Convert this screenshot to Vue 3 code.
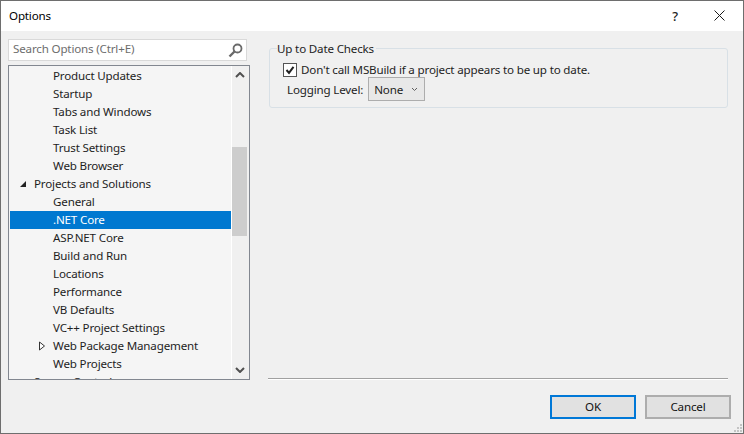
<script setup>
const rows = [
  { label: 'Product Updates', indent: 'child' },
  { label: 'Startup', indent: 'child' },
  { label: 'Tabs and Windows', indent: 'child' },
  { label: 'Task List', indent: 'child' },
  { label: 'Trust Settings', indent: 'child' },
  { label: 'Web Browser', indent: 'child' },
  { label: 'Projects and Solutions', indent: 'parent', arrow: 'open' },
  { label: 'General', indent: 'child' },
  { label: '.NET Core', indent: 'child', selected: true },
  { label: 'ASP.NET Core', indent: 'child' },
  { label: 'Build and Run', indent: 'child' },
  { label: 'Locations', indent: 'child' },
  { label: 'Performance', indent: 'child' },
  { label: 'VB Defaults', indent: 'child' },
  { label: 'VC++ Project Settings', indent: 'child' },
  { label: 'Web Package Management', indent: 'child', arrow: 'closed' },
  { label: 'Web Projects', indent: 'child' },
  { label: 'Source Control', indent: 'parent' },
]
</script>

<template>
  <div class="window">
    <header class="titlebar">
      <span class="title">Options</span>
      <span class="help">?</span>
      <svg class="close" width="11" height="11" viewBox="0 0 11 11"><path d="M.5.5l10 10M10.5.5l-10 10" stroke="#1a1a1a" fill="none"/></svg>
    </header>
    <div class="content">
      <div class="main">
        <aside class="left">
          <div class="search">
            <span class="placeholder">Search Options (Ctrl+E)</span>
            <svg width="15" height="15" viewBox="0 0 15 15"><circle cx="9.5" cy="5.5" r="4" fill="none" stroke="#6a6a6a" stroke-width="1.8"/><path d="M6.5 8.5L1.5 13.5" stroke="#6a6a6a" stroke-width="2.4"/></svg>
          </div>
          <div class="tree">
            <div class="tree-list">
              <div v-for="r in rows" :key="r.label" class="row" :class="[r.indent, { selected: r.selected }]">
                <svg v-if="r.arrow === 'open'" class="arrow" width="8" height="8" viewBox="0 0 8 8"><path d="M7 1v6H1z" fill="#222"/></svg>
                <svg v-if="r.arrow === 'closed'" class="arrow" width="8" height="10" viewBox="0 0 8 10"><path d="M1.5 1l5 4-5 4z" fill="#fff" stroke="#333"/></svg>
                <span>{{ r.label }}</span>
              </div>
            </div>
            <div class="scrollbar">
              <div class="sb-btn"><svg width="10" height="6" viewBox="0 0 10 6"><path d="M1 5l4-4 4 4" fill="none" stroke="#505050" stroke-width="2"/></svg></div>
              <div class="sb-track"><div class="sb-thumb"></div></div>
              <div class="sb-btn"><svg width="10" height="6" viewBox="0 0 10 6"><path d="M1 1l4 4 4-4" fill="none" stroke="#505050" stroke-width="2"/></svg></div>
            </div>
          </div>
        </aside>
        <section class="right">
          <fieldset class="group">
            <legend>Up to Date Checks</legend>
            <label class="check-row">
              <span class="check"><svg width="12" height="12" viewBox="0 0 12 12"><path d="M2.5 6l2.5 2.8 4.5-6" fill="none" stroke="#222" stroke-width="2"/></svg></span>
              <span>Don't call MSBuild if a project appears to be up to date.</span>
            </label>
            <div class="log-row">
              <span>Logging Level:</span>
              <div class="select">
                <span>None</span>
                <svg width="7" height="5" viewBox="0 0 7 5"><path d="M1 1l2.5 2.5L6 1" fill="none" stroke="#606060"/></svg>
              </div>
            </div>
          </fieldset>
          <div class="divider"></div>
        </section>
      </div>
      <footer class="footer">
        <button class="btn primary">OK</button>
        <button class="btn">Cancel</button>
      </footer>
      <svg class="grip" width="10" height="10" viewBox="0 0 10 10"><path d="M7 1h2v2H7zM4 4h2v2H4zM7 4h2v2H7zM1 7h2v2H1zM4 7h2v2H4zM7 7h2v2H7z" fill="#c4c4c4"/></svg>
    </div>
  </div>
</template>

<style>
html, body { margin: 0; background: #f0f0f0; }
</style>

<style scoped>
.window {
  width: 744px;
  height: 434px;
  box-sizing: border-box;
  border: 1px solid #6e6e6e;
  font-family: "Noto Sans", "Open Sans", sans-serif;
  font-size: 11.6px;
  letter-spacing: -0.17px;
  color: #1e1e1e;
  display: flex;
  flex-direction: column;
  overflow: hidden;
  background: #f0f0f0;
}
.titlebar {
  height: 30px;
  box-sizing: border-box;
  flex: none;
  background: #fff;
  display: flex;
  align-items: center;
  padding: 0 18px 1px 8px;
}
.title { flex: 1; color: #000; line-height: 16px; padding-top: 1px; }
.help { margin-right: 36px; font-size: 13px; color: #222; font-weight: 500; }
.close { display: block; }
.content { flex: 1; display: flex; flex-direction: column; position: relative; min-height: 0; }
.main { display: flex; height: 349px; padding: 8px 0 0 7px; box-sizing: border-box; }
.left { width: 242px; flex: none; display: flex; flex-direction: column; gap: 4px; }
.search {
  width: 239px;
  height: 22px;
  box-sizing: border-box;
  border: 1px solid #d9d9d9;
  background: #fff;
  display: flex;
  align-items: center;
  justify-content: space-between;
  padding: 0 3px 0 4px;
}
.placeholder { color: #6d6d6d; line-height: 16px; padding-bottom: 2px; }
.tree {
  width: 242px;
  height: 315px;
  box-sizing: border-box;
  border: 1px solid #828790;
  background: #f5f5f5;
  display: flex;
  overflow: hidden;
}
.tree-list { width: 222px; padding: 1px 0 0 1px; box-sizing: border-box; flex: none; }
.row {
  height: 18px;
  line-height: 18px;
  white-space: nowrap;
  position: relative;
}
.row.child { padding-left: 43px; }
.row.parent { padding-left: 24px; }
.row.selected { background: #0078d0; color: #fff; }
.arrow { position: absolute; top: 5px; }
.row.parent .arrow { left: 9px; }
.row.child .arrow { left: 28px; top: 4px; }
.scrollbar {
  flex: 1;
  border-left: 1px solid #fff;
  background: #f0f0f0;
  display: flex;
  flex-direction: column;
}
.sb-btn { height: 18px; display: flex; align-items: center; justify-content: center; flex: none; padding-right: 1px; }
.sb-track { flex: 1; padding-top: 63px; }
.sb-thumb { width: 15px; height: 89px; background: #cdcdcd; }
.right { flex: 1; padding-left: 18px; padding-right: 15px; display: flex; flex-direction: column; }
.group {
  margin: 2px 0 0 1px;
  height: 67px;
  box-sizing: border-box;
  padding: 0 0 0 13px;
  border: 1px solid #d8e0e6;
  border-radius: 3px;
  min-width: 0;
}
.group legend { padding: 0 2px 0 0; margin-left: -6px; color: #1e1e1e; line-height: 15px; }
.check-row { display: flex; align-items: center; gap: 4px; height: 17px; margin-top: 5px; }
.check {
  width: 14px;
  height: 14px;
  box-sizing: border-box;
  border: 1px solid #555;
  background: #fff;
  display: flex;
  align-items: center;
  justify-content: center;
}
.log-row { display: flex; align-items: center; gap: 5px; margin: -1px 0 0 4px; }
.select {
  width: 57px;
  height: 24px;
  box-sizing: border-box;
  border: 1px solid #adadad;
  background: #e8e8e8;
  display: flex;
  align-items: center;
  justify-content: space-between;
  padding: 0 6px 0 5px;
}
.divider {
  margin-top: auto;
  height: 2px;
  box-sizing: border-box;
  background: #a0a0a0;
  border-bottom: 1px solid #fff;
}
.footer {
  flex: 1;
  display: flex;
  justify-content: flex-end;
  gap: 9px;
  padding: 15px 12px 0 0;
}
.btn {
  width: 86px;
  height: 24px;
  box-sizing: border-box;
  border: 2px solid #adadad;
  background: #e1e1e1;
  font: inherit;
  letter-spacing: inherit;
  color: #111;
  padding: 0 0 2px;
}
.btn.primary { border-color: #0078d7; }
.grip { position: absolute; right: 0; bottom: 0; }
</style>
